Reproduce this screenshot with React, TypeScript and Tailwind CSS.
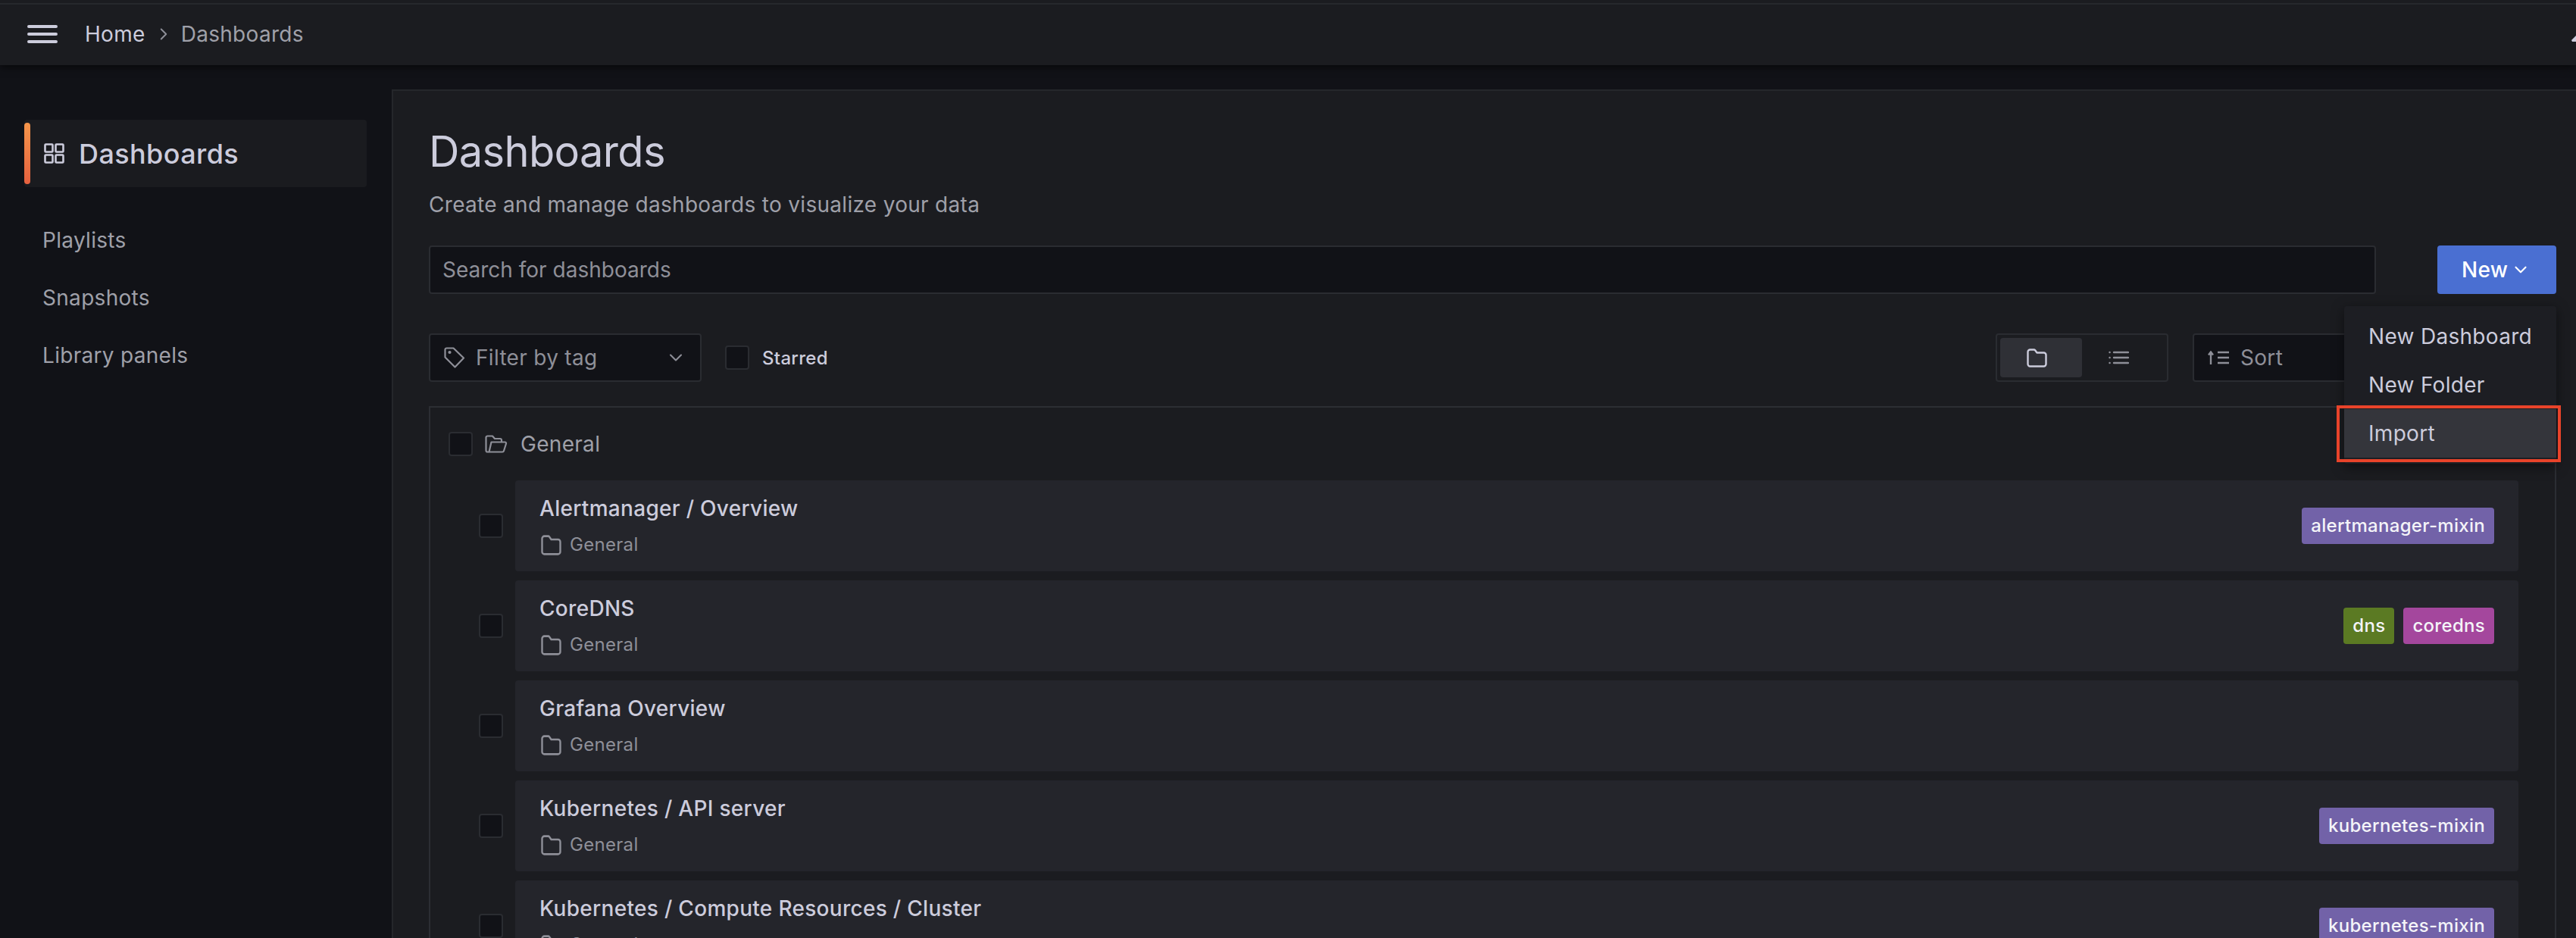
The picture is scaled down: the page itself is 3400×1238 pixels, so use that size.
import React from 'react';
import { ChevronDown, ChevronRight } from 'lucide-react';

function FolderIcon({ className = '', w = 27, h = 25 }: { className?: string; w?: number; h?: number }) {
  return (
    <svg width={w} height={h} viewBox="0 0 27 25" preserveAspectRatio="none" fill="none" stroke="currentColor" strokeWidth="2.4" strokeLinejoin="round" className={className}>
      <path d="M4.5 1.5h5a2 2 0 0 1 1.6.8l2.4 3.2h9a3 3 0 0 1 3 3v12a3 3 0 0 1-3 3h-18a3 3 0 0 1-3-3V4.500a3 3 0 0 1 3-3z" />
    </svg>
  );
}

function Checkbox() {
  return <div className="w-[32px] h-[32px] shrink-0 rounded-[4px] border-2 border-[#2a2c31] bg-[#111217]" />;
}

function Tag({ label, color }: { label: string; color: string }) {
  return (
    <span className={`h-[48px] px-[12px] flex items-center rounded-[4px] text-[24px] font-medium text-[#f4f4f8] ${color}`}>
      {label}
    </span>
  );
}

const rows = [
  { title: 'Alertmanager / Overview', tags: [{ label: 'alertmanager-mixin', color: 'bg-[#7262a8]' }] },
  {
    title: 'CoreDNS',
    tags: [
      { label: 'dns', color: 'bg-[#5b7a23]' },
      { label: 'coredns', color: 'bg-[#a4479d]' },
    ],
  },
  { title: 'Grafana Overview', tags: [] },
  { title: 'Kubernetes / API server', tags: [{ label: 'kubernetes-mixin', color: 'bg-[#7262a8]' }] },
  { title: 'Kubernetes / Compute Resources / Cluster', tags: [{ label: 'kubernetes-mixin', color: 'bg-[#7262a8]' }] },
];

export default function App() {
  return (
    <div className="w-full h-[1238px] overflow-hidden flex flex-col bg-[#111217] font-[Inter,sans-serif] text-[28px] tracking-[0.3px] text-[#ccccdc]">
      {/* Top bar */}
      <header className="relative z-10 h-[86px] shrink-0 bg-[#1b1c20] shadow-[0_2px_10px_rgba(0,0,0,0.7)]">
        <div className="h-[6px] border-b-2 border-[#26282c]" />
        <div className="h-[80px] flex items-center pl-[36px] pb-[2px]">
          <svg width="40" height="24" viewBox="0 0 40 24" stroke="#ccccdc" strokeWidth="4" strokeLinecap="round">
            <path d="M2 2h36M2 12h36M2 22h36" />
          </svg>
          <span className="ml-[36px] leading-[36px]">Home</span>
          <ChevronRight size={26} strokeWidth={1.8} className="ml-[11px] text-[#8e8f98]" />
          <span className="ml-[10px] leading-[36px] text-[#9fa0a9]">Dashboards</span>
        </div>
        <svg width="6" height="8" viewBox="0 0 6 8" className="absolute right-0 top-[47px]">
          <path d="M0 6 L6 0 V8 H1z" fill="#ccccdc" />
        </svg>
      </header>

      <div className="flex-1 flex min-h-0">
        {/* Sidebar */}
        <aside className="w-[517px] shrink-0 pt-[72px] pl-[32px] pr-[33px]">
          <div className="h-[89px] flex items-center rounded-[4px] bg-[#1a1b1f]">
            <div className="w-[8px] h-[81px] rounded-full bg-gradient-to-b from-[#f5954a] to-[#e5603f]" />
            <svg width="27" height="27" viewBox="0 0 27 27" fill="none" stroke="#ccccdc" strokeWidth="2.600" className="ml-[18px]">
              <rect x="1.500" y="1.500" width="10" height="10" rx="1" />
              <rect x="15.500" y="1.500" width="10" height="10" rx="1" />
              <rect x="1.500" y="15.500" width="10" height="10" rx="1" />
              <rect x="15.500" y="15.500" width="10" height="10" rx="1" />
            </svg>
            <span className="ml-[19px] text-[36px] font-medium leading-[44px] tracking-[0.4px]">Dashboards</span>
          </div>
          <nav className="mt-[32px] pl-[24px] text-[#9fa0a9]">
            <div className="h-[76px] flex items-center">Playlists</div>
            <div className="h-[76px] flex items-center">Snapshots</div>
            <div className="h-[76px] flex items-center">Library panels</div>
          </nav>
        </aside>

        {/* Main panel */}
        <main className="flex-1 min-w-0 mt-[32px] border-l-2 border-t-2 border-[#25272b] bg-[#1b1c20] pl-[47px] pr-[26px] pt-[46px]">
          <h1 className="text-[56px] leading-[68px] font-normal tracking-[-0.65px]">Dashboards</h1>
          <p className="mt-[16px] leading-[40px] text-[#9fa0a9]">Create and manage dashboards to visualize your data</p>

          <div className="mt-[34px] flex items-center">
            <div className="flex-1 h-[64px] flex items-center rounded-[4px] border-2 border-[#2a2c31] bg-[#111217] px-[16px] text-[#8e8f98] tracking-normal">
              Search for dashboards
            </div>
            <div className="relative ml-[81px] shrink-0">
              <button className="w-[157px] h-[64px] flex items-center pl-[32px] rounded-[4px] bg-[#4a6fd2] text-white font-medium">
                New
                <ChevronDown size={26} strokeWidth={2} className="ml-[4px]" />
              </button>
              <div className="absolute z-20 right-0 top-[80px] w-[280px] py-[8px] rounded-[4px] bg-[#1d1e23] shadow-[0_4px_16px_rgba(0,0,0,0.5)]">
                <div className="h-[64px] flex items-center pl-[32px]">New Dashboard</div>
                <div className="h-[64px] flex items-center pl-[32px]">New Folder</div>
                <div className="relative h-[64px] flex items-center pl-[32px] bg-[#34353b]">
                  Import
                  <div className="absolute -left-[10px] -right-[6px] -top-[5px] -bottom-[6px] border-[4px] border-[#e8432a]" />
                </div>
              </div>
            </div>
          </div>

          <div className="mt-[52px] flex items-center h-[64px]">
            <div className="w-[360px] h-[64px] flex items-center rounded-[4px] border-2 border-[#2a2c31] bg-[#111217] pl-[18px] pr-[18px] text-[#8e8f98]">
              <svg width="28" height="28" viewBox="0 0 28 28" fill="none" stroke="currentColor" strokeWidth="2.200" strokeLinejoin="round">
                <path d="M3.500 1.500H12.500L26 14.500L14.500 26.500L1.500 13.500V3.500a2 2 0 0 1 2-2z" />
                <circle cx="7.500" cy="7" r="1" fill="currentColor" />
              </svg>
              <span className="ml-[14px]">Filter by tag</span>
              <ChevronDown size={28} strokeWidth={1.800} className="ml-auto" />
            </div>
            <div className="ml-[31px]">
              <Checkbox />
            </div>
            <span className="ml-[17px] pt-[2px] text-[24px] font-medium">Starred</span>

            <div className="ml-auto w-[228px] h-[64px] flex items-center rounded-[4px] border-2 border-[#2a2c31] p-[4px]">
              <div className="w-[108px] h-[52px] flex items-center justify-center rounded-[4px] bg-[#2f3036] pr-[12px]">
                <FolderIcon className="text-[#ccccdc]" />
              </div>
              <div className="w-[108px] h-[52px] flex items-center justify-center text-[#8e8f98] pr-[12px]">
                <svg width="27" height="18" viewBox="0 0 27 18" stroke="currentColor" strokeWidth="2.400" strokeLinecap="round">
                  <path d="M1.500 2h.1M1.500 9h.1M1.500 16h.1M7 2h19M7 9h19M7 16h19" />
                </svg>
              </div>
            </div>
            <div className="ml-[32px] mr-[120px] w-[360px] h-[64px] flex items-center rounded-[4px] border-2 border-[#2a2c31] bg-[#111217] pl-[18px] text-[#8e8f98]">
              <svg width="28" height="18" viewBox="0 0 28 18" fill="none" stroke="currentColor" strokeWidth="2.400">
                <path d="M4 18V2M1 5.500L4 1.500L7 5.500M13 2h15M13 9h15M13 16h15" />
              </svg>
              <span className="ml-[15px]">Sort</span>
            </div>
          </div>

          {/* Dashboard list */}
          <section className="mt-[32px] border-2 border-[#2c2e33] pr-[48px]">
            <div className="h-[96px] flex items-center pl-[24px]">
              <Checkbox />
              <svg width="30" height="24" viewBox="0 0 30 24" fill="none" stroke="#8e8f98" strokeWidth="2.200" strokeLinejoin="round" className="ml-[16px]">
                <path d="M5.500 22.500H3.500a2 2 0 0 1-2-2V3.500a2 2 0 0 1 2-2H10l3 3.500h7a2 2 0 0 1 2 2V9.500" />
                <path d="M8.500 9.500H26.500a1.500 1.500 0 0 1 1.500 2L25 21a2 2 0 0 1-2 1.500H5.500z" />
              </svg>
              <span className="ml-[17px] text-[#9fa0a9]">General</span>
            </div>
            <div className="flex flex-col gap-[12px]">
              {rows.map((row, i) => (
                <div key={i} className="flex items-center pl-[64px]">
                  <Checkbox />
                  <div className="ml-[16px] flex-1 h-[120px] flex items-center justify-between rounded-[4px] bg-[#24252b] pl-[32px] pr-[32px]">
                    <div>
                      <div className="font-medium leading-[36px] mt-[2px]">{row.title}</div>
                      <div className="mt-[12px] flex items-center h-[36px] text-[24px] text-[#8e8f98]">
                        <FolderIcon className="ml-[2px]" h={27} />
                        <span className="ml-[11px]">General</span>
                      </div>
                    </div>
                    <div className="flex gap-[12px]">
                      {row.tags.map((t) => (
                        <Tag key={t.label} label={t.label} color={t.color} />
                      ))}
                    </div>
                  </div>
                </div>
              ))}
            </div>
          </section>
        </main>
      </div>
    </div>
  );
}
